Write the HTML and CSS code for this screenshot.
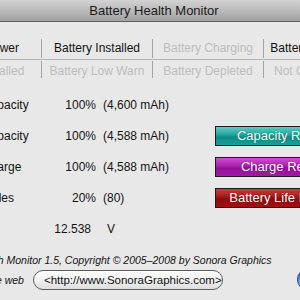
FILE: index.html
```html
<!DOCTYPE html>
<html lang="en">
<head>
  <meta charset="UTF-8">
  <title>Battery Health Monitor</title>
  <link rel="stylesheet" href="styles.css">
</head>
<body>
  <div class="window">
    <div class="titlebar">Battery Health Monitor</div>

    <div class="status">
      <div class="status-row">
        <div class="cell first on">AC Power</div>
        <div class="cell on">Battery Installed</div>
        <div class="cell">Battery Charging</div>
        <div class="cell last on">Battery Charged</div>
      </div>
      <div class="status-line"></div>
      <div class="status-row lower">
        <div class="cell first">AC Installed</div>
        <div class="cell">Battery Low Warn</div>
        <div class="cell">Battery Depleted</div>
        <div class="cell last">Not Connected</div>
      </div>
    </div>

    <div class="stats">
      <div class="stat-row">
        <span class="label">Capacity</span>
        <span class="value">100%</span>
        <span class="detail">(4,600 mAh)</span>
      </div>
      <div class="stat-row">
        <span class="label">Capacity</span>
        <span class="value">100%</span>
        <span class="detail">(4,588 mAh)</span>
        <button class="reset teal">Capacity Reset</button>
      </div>
      <div class="stat-row">
        <span class="label">Charge</span>
        <span class="value">100%</span>
        <span class="detail">(4,588 mAh)</span>
        <button class="reset purple">Charge Reset</button>
      </div>
      <div class="stat-row">
        <span class="label short">Cycles</span>
        <span class="value">20%</span>
        <span class="detail">(80)</span>
        <button class="reset red">Battery Life Reset</button>
      </div>
      <div class="stat-row volts">
        <span class="label"></span>
        <span class="value">12.538</span>
        <span class="detail">V</span>
      </div>
    </div>

    <p class="copyright">Battery Health Monitor 1.5, Copyright © 2005–2008 by Sonora Graphics</p>

    <div class="web-row">
      <span class="web-label">Visit us on the web</span>
      <button class="link">&lt;http://www.SonoraGraphics.com&gt;</button>
      <button class="aqua" aria-label="Register"></button>
    </div>
  </div>
</body>
</html>
```

FILE: styles.css
```css
html, body {
  margin: 0;
  overflow: hidden;
  background: #e8e8e8;
}
body {
  font-family: 'Liberation Sans', Arial, sans-serif;
  font-size: 12px;
  color: #141414;
}
.window {
  width: 436px;
  margin-left: -64px;
}
.titlebar {
  height: 21px;
  line-height: 21px;
  text-align: center;
  font-size: 13px;
  color: #1a1a1a;
  background: linear-gradient(to bottom, #d2d2d2 0%, #bababa 50%, #a2a2a2 100%);
  border-bottom: 1px solid #606060;
}

/* status grid */
.status {
  margin-top: 17px;
}
.status-row {
  display: flex;
}
.cell {
  width: 110px;
  height: 19px;
  line-height: 19px;
  text-align: center;
  white-space: nowrap;
  color: #bdbdbd;
  border-right: 1px solid #a4a4a4;
}
.cell.on {
  color: #111;
}
.cell.first {
  width: 98px;
  padding-left: 7px;
}
.cell.last {
  width: 100px;
  border-right: none;
}
.status-row.lower .cell {
  height: 17px;
  line-height: 21px;
}
.status-line {
  height: 1px;
  margin: 1px 0;
  background: #b4b4b4;
}

/* stats */
.stats {
  margin-top: 11px;
}
.stat-row {
  display: flex;
  align-items: center;
  height: 31px;
  padding-left: 46px;
  white-space: nowrap;
}
.label {
  width: 70px;
}
.label.short {
  margin-left: -4px;
  width: 74px;
}
.value {
  width: 44px;
  text-align: right;
}
.detail {
  width: 112px;
  margin-left: 7px;
}
.volts .value {
  padding-right: 5px;
  width: 39px;
}
.volts .detail {
  margin-left: 11px;
}
.reset {
  width: 132px;
  height: 20px;
  padding: 0;
  font-family: inherit;
  font-size: 13px;
  color: #fff;
  border: 1px solid #1c1c1c;
  text-shadow: 0 0 1px rgba(0,0,0,0.4);
}
.teal {
  background: linear-gradient(to bottom, #5ecac2 0%, #1ea39c 45%, #0c8c85 55%, #18a098 100%);
}
.purple {
  background: linear-gradient(to bottom, #cc50ce 0%, #a91fac 45%, #930e97 55%, #a21aa5 100%);
}
.red {
  background: linear-gradient(to bottom, #c44040 0%, #a51616 45%, #8b0b0b 55%, #9e1313 100%);
}

/* footer */
.copyright {
  margin: 10px 0 0 1px;
  font-size: 10.5px;
  line-height: 12px;
  font-style: italic;
  white-space: nowrap;
}
.web-row {
  display: flex;
  align-items: center;
  margin-top: 3px;
  white-space: nowrap;
}
.web-label {
  font-size: 10.5px;
  font-style: italic;
}
.link {
  margin-left: 9px;
  width: 190px;
  height: 20px;
  padding: 0 0 0 10px;
  text-align: left;
  font-family: inherit;
  font-size: 11.5px;
  color: #111;
  border: 1px solid #5c5c5c;
  border-radius: 10px;
  background: linear-gradient(to bottom, #ffffff 0%, #f2f2f2 50%, #dedede 100%);
}
.aqua {
  margin-left: 74px;
  width: 70px;
  height: 21px;
  padding: 0;
  border: 1px solid #2a4a8a;
  border-radius: 10px;
  background: linear-gradient(to bottom, #2b5fc8 0%, #5a8ee0 50%, #9cc4f4 100%);
}
```
